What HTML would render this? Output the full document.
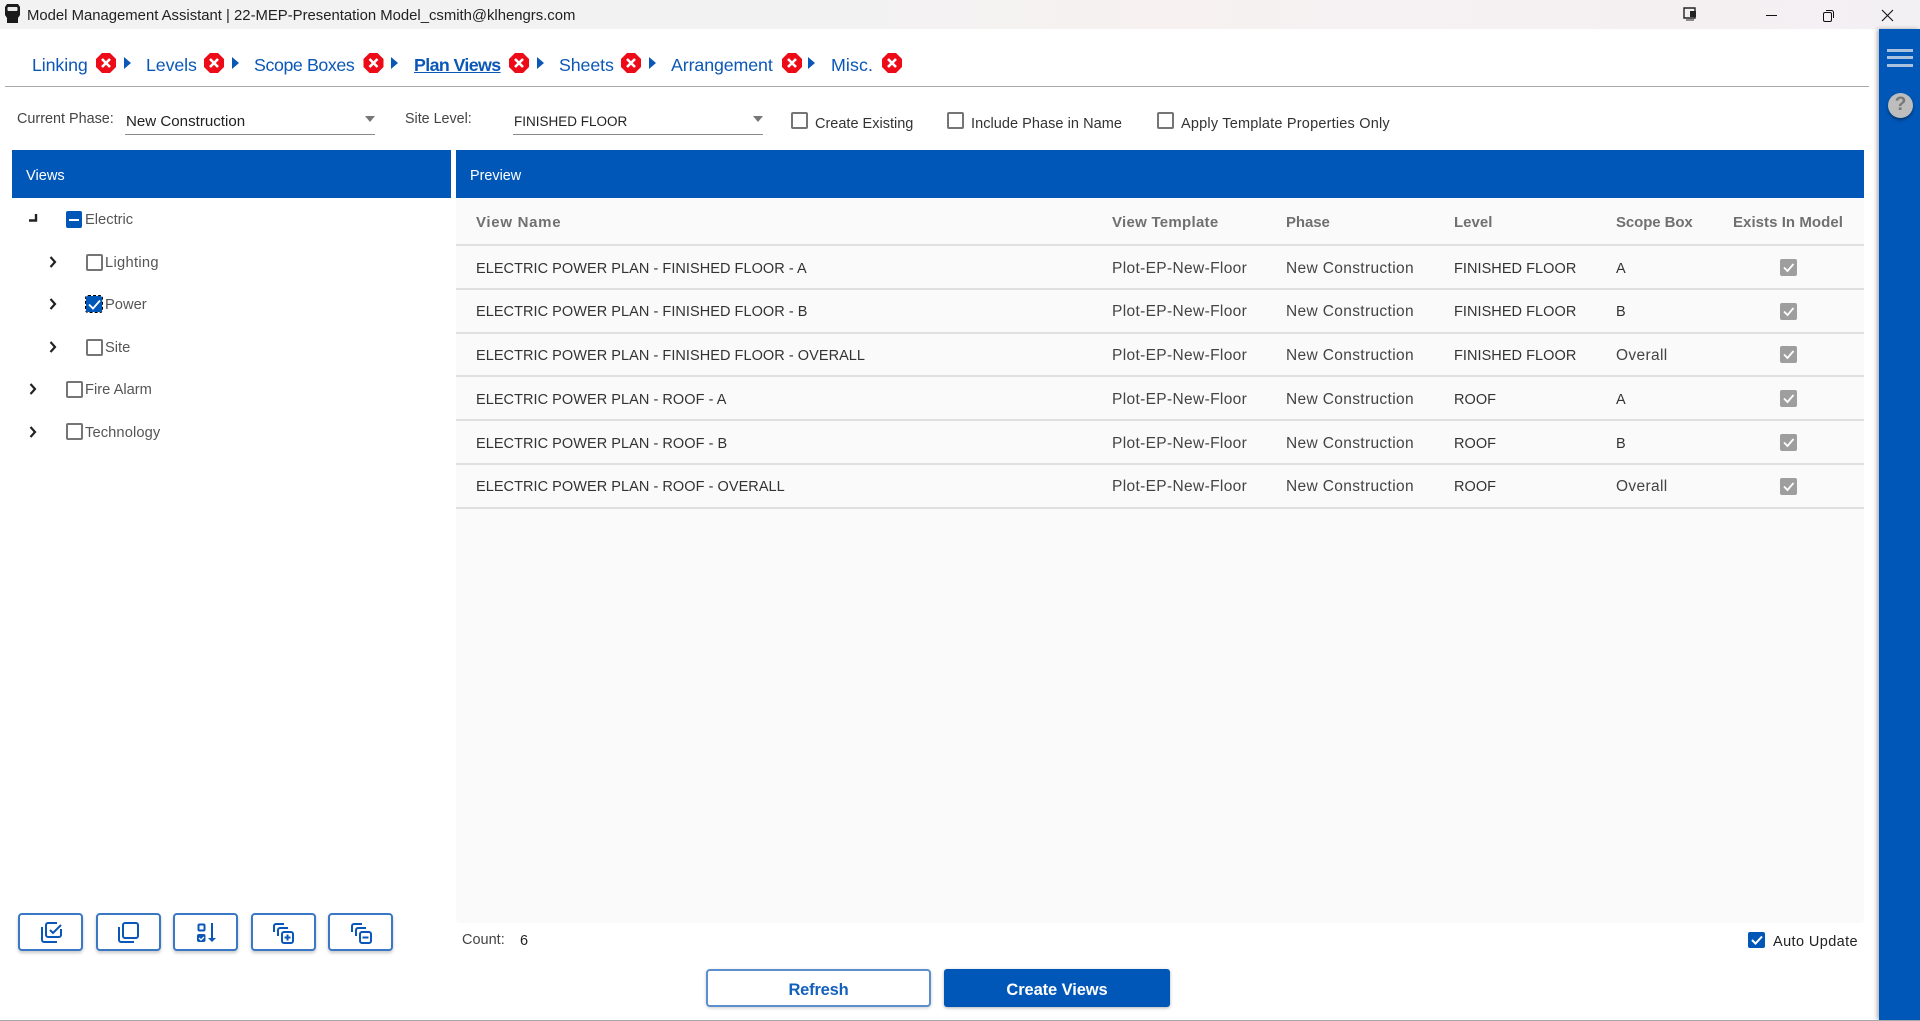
<!DOCTYPE html>
<html><head><meta charset="utf-8"><title>Model Management Assistant</title>
<style>
html,body{margin:0;padding:0;width:1920px;height:1021px;overflow:hidden;background:#fff;font-family:"Liberation Sans",sans-serif;color:#333}
.a{position:absolute}
.t{position:absolute;white-space:nowrap;line-height:20px;height:20px}
.nav{font-size:17.8px;color:#0b57b7;letter-spacing:-.1px}
.row{font-size:14.5px;color:#333;letter-spacing:.05px}
.m{font-size:15.5px;letter-spacing:.35px;color:#444}
.h{font-size:15px;color:#707070;font-weight:bold}
.line{position:absolute;left:456px;width:1408px;height:2px;background:#e0e0e0}
.cb{position:absolute;width:13px;height:13px;border:2px solid #757575;border-radius:2px;background:#fff}
.cbb{position:absolute;background:#0057b8;border-radius:2px}
.gc{position:absolute;left:1780px;width:17px;height:17px;background:#9e9e9e;border-radius:2px}
.btn{position:absolute;top:913px;width:61px;height:34px;border:2px solid #3b78c4;border-radius:4px;background:#fff;box-shadow:0 2px 3px rgba(0,0,0,.22)}
svg{position:absolute;overflow:visible}
.tree{font-size:14.7px;color:#555}
.lab{font-size:14.5px;color:#333}
</style></head><body>

<div class="a" style="left:0;top:0;width:1920px;height:29px;background:linear-gradient(90deg,#f2f2f2 0,#f3f2f2 45%,#f7f1f1 60%,#f3f0f3 100%)"></div>
<svg style="left:4px;top:3px" width="17" height="21" viewBox="0 0 17 21"><path d="M3 1h11l2 3v8l-2 3v5H3v-5l-2-3V4z" fill="#1a1a1a"/><rect x="3.500" y="4" width="10" height="4" rx="1" fill="#e8e8e8"/></svg>
<div class="t" style="left:27px;top:6px;font-size:14.87px;color:#222">Model Management Assistant | 22-MEP-Presentation Model_csmith@klhengrs.com</div>
<svg style="left:1682px;top:6px" width="16" height="16" viewBox="0 0 16 16"><path d="M2 2h11v10H2z" fill="none" stroke="#222" stroke-width="1.400"/><rect x="8" y="5" width="6" height="6" fill="#222"/><path d="M4 14h8" stroke="#222"/></svg>
<div class="a" style="left:1766px;top:15px;width:11px;height:1px;background:#111"></div>
<svg style="left:1822px;top:9px" width="13" height="13" viewBox="0 0 13 13"><rect x="1.500" y="3.500" width="8" height="9" rx="1.500" fill="none" stroke="#111"/><path d="M4 1.500h5.500a2 2 0 0 1 2 2V9" fill="none" stroke="#111"/></svg>
<svg style="left:1881px;top:9px" width="13" height="13" viewBox="0 0 13 13"><path d="M1 1l11 11M12 1L1 12" stroke="#111" stroke-width="1.100"/></svg>

<div class="t nav" style="left:32px;top:55px">Linking</div>
<div class="t nav" style="left:146px;top:55px">Levels</div>
<div class="t nav" style="left:254px;top:55px;letter-spacing:-.4px">Scope Boxes</div>
<div class="t nav" style="left:414px;top:55px;font-weight:bold;text-decoration:underline;letter-spacing:-.6px;color:#0b57b7">Plan Views</div>
<div class="t nav" style="left:559px;top:55px">Sheets</div>
<div class="t nav" style="left:671px;top:55px">Arrangement</div>
<div class="t nav" style="left:831px;top:55px;letter-spacing:.1px">Misc.</div>

<svg style="left:0;top:0" width="920" height="80" viewBox="0 0 920 80">
<g transform="translate(106 63)"><path d="M-4-10h8l6 6v8l-6 6h-8l-6-6v-8z" fill="#ec0b17"/><path d="M-4-4l8 8M4-4l-8 8" stroke="#fff" stroke-width="2.600"/></g>
<g transform="translate(214 63)"><path d="M-4-10h8l6 6v8l-6 6h-8l-6-6v-8z" fill="#ec0b17"/><path d="M-4-4l8 8M4-4l-8 8" stroke="#fff" stroke-width="2.600"/></g>
<g transform="translate(373.500 63)"><path d="M-4-10h8l6 6v8l-6 6h-8l-6-6v-8z" fill="#ec0b17"/><path d="M-4-4l8 8M4-4l-8 8" stroke="#fff" stroke-width="2.600"/></g>
<g transform="translate(519 63)"><path d="M-4-10h8l6 6v8l-6 6h-8l-6-6v-8z" fill="#ec0b17"/><path d="M-4-4l8 8M4-4l-8 8" stroke="#fff" stroke-width="2.600"/></g>
<g transform="translate(631 63)"><path d="M-4-10h8l6 6v8l-6 6h-8l-6-6v-8z" fill="#ec0b17"/><path d="M-4-4l8 8M4-4l-8 8" stroke="#fff" stroke-width="2.600"/></g>
<g transform="translate(792 63)"><path d="M-4-10h8l6 6v8l-6 6h-8l-6-6v-8z" fill="#ec0b17"/><path d="M-4-4l8 8M4-4l-8 8" stroke="#fff" stroke-width="2.600"/></g>
<g transform="translate(892 63)"><path d="M-4-10h8l6 6v8l-6 6h-8l-6-6v-8z" fill="#ec0b17"/><path d="M-4-4l8 8M4-4l-8 8" stroke="#fff" stroke-width="2.600"/></g>
<g fill="#0b57b7"><path d="M124 57l7 6-7 6z"/><path d="M232 57l7 6-7 6z"/><path d="M391 57l7 6-7 6z"/><path d="M537 57l7 6-7 6z"/><path d="M649 57l7 6-7 6z"/><path d="M808 57l7 6-7 6z"/></g>
</svg>

<div class="a" style="left:5px;top:86px;width:1864px;height:1px;background:#a8a8a8"></div>

<div class="t" style="left:17px;top:109px;font-size:14.4px;color:#444">Current Phase:</div>
<div class="t" style="left:126px;top:112px;font-size:15.1px;color:#222">New Construction</div>
<div class="a" style="left:125px;top:134px;width:250px;height:1px;background:#8a8a8a"></div>
<svg style="left:365px;top:116px" width="10" height="6"><path d="M0 0h10L5 6z" fill="#777"/></svg>
<div class="t" style="left:405px;top:109px;font-size:14.3px;color:#444">Site Level:</div>
<div class="t" style="left:514px;top:112px;font-size:13.5px;color:#222">FINISHED FLOOR</div>
<div class="a" style="left:513px;top:134px;width:250px;height:1px;background:#8a8a8a"></div>
<svg style="left:753px;top:116px" width="10" height="6"><path d="M0 0h10L5 6z" fill="#777"/></svg>

<div class="cb" style="left:791px;top:112px"></div>
<div class="t lab" style="left:815px;top:114px">Create Existing</div>
<div class="cb" style="left:947px;top:112px"></div>
<div class="t lab" style="left:971px;top:114px;letter-spacing:.05px">Include Phase in Name</div>
<div class="cb" style="left:1157px;top:112px"></div>
<div class="t lab" style="left:1181px;top:114px;letter-spacing:.2px">Apply Template Properties Only</div>

<!-- Views panel -->
<div class="a" style="left:12px;top:150px;width:439px;height:48px;background:#0057b8"></div>
<div class="t" style="left:26px;top:165px;font-size:14.6px;color:#fff;padding-top:1px">Views</div>
<svg style="left:28px;top:213px" width="10" height="10"><path d="M1 7.500h7V1" fill="none" stroke="#222" stroke-width="2.400"/></svg>
<div class="cbb" style="left:66px;top:211px;width:16px;height:17px"></div>
<div class="a" style="left:69px;top:219px;width:10px;height:2px;background:#fff"></div>
<div class="t tree" style="left:85px;top:210px">Electric</div>

<svg style="left:49px;top:256px" width="8" height="12"><path d="M1.500 1l4.500 5-4.500 5" fill="none" stroke="#222" stroke-width="2.200"/></svg>
<div class="cb" style="left:86px;top:254px"></div>
<div class="t tree" style="left:105px;top:253px;letter-spacing:.3px">Lighting</div>

<svg style="left:49px;top:298px" width="8" height="12"><path d="M1.500 1l4.500 5-4.500 5" fill="none" stroke="#222" stroke-width="2.200"/></svg>
<div class="cbb" style="left:86px;top:296px;width:16px;height:16px;outline:1px dashed #000"></div>
<svg style="left:88px;top:299px" width="13" height="11"><path d="M1 5.500l4 4 7-8" fill="none" stroke="#fff" stroke-width="1.800"/></svg>
<div class="t tree" style="left:105px;top:295px">Power</div>

<svg style="left:49px;top:341px" width="8" height="12"><path d="M1.500 1l4.500 5-4.500 5" fill="none" stroke="#222" stroke-width="2.200"/></svg>
<div class="cb" style="left:86px;top:339px"></div>
<div class="t tree" style="left:105px;top:338px">Site</div>

<svg style="left:29px;top:383px" width="8" height="12"><path d="M1.500 1l4.500 5-4.500 5" fill="none" stroke="#222" stroke-width="2.200"/></svg>
<div class="cb" style="left:66px;top:381px"></div>
<div class="t tree" style="left:85px;top:380px">Fire Alarm</div>

<svg style="left:29px;top:426px" width="8" height="12"><path d="M1.500 1l4.500 5-4.500 5" fill="none" stroke="#222" stroke-width="2.200"/></svg>
<div class="cb" style="left:66px;top:423px"></div>
<div class="t tree" style="left:85px;top:423px;letter-spacing:.1px">Technology</div>

<!-- Preview panel -->
<div class="a" style="left:456px;top:198px;width:1408px;height:725px;background:#fafafa;border-radius:0 0 4px 4px"></div>
<div class="a" style="left:456px;top:150px;width:1408px;height:48px;background:#0057b8"></div>
<div class="t" style="left:470px;top:166px;font-size:14.4px;color:#fff">Preview</div>

<div class="t h" style="left:476px;top:213px;letter-spacing:.7px">View Name</div>
<div class="t h" style="left:1112px;top:213px;letter-spacing:.28px">View Template</div>
<div class="t h" style="left:1286px;top:213px;letter-spacing:-.1px">Phase</div>
<div class="t h" style="left:1454px;top:213px">Level</div>
<div class="t h" style="left:1616px;top:213px;letter-spacing:-.1px">Scope Box</div>
<div class="t h" style="left:1733px;top:213px;letter-spacing:.05px">Exists In Model</div>
<div class="line" style="top:244px"></div>
<div class="line" style="top:288px"></div>
<div class="line" style="top:332px"></div>
<div class="line" style="top:375px"></div>
<div class="line" style="top:419px"></div>
<div class="line" style="top:463px"></div>
<div class="line" style="top:507px"></div>

<div class="t row" style="left:476px;top:259px">ELECTRIC POWER PLAN - FINISHED FLOOR - A</div>
<div class="t row m" style="left:1112px;top:259px">Plot-EP-New-Floor</div>
<div class="t row m" style="left:1286px;top:259px">New Construction</div>
<div class="t row" style="left:1454px;top:259px">FINISHED FLOOR</div>
<div class="t row" style="left:1616px;top:259px">A</div>
<div class="gc" style="top:259px"></div>

<div class="t row" style="left:476px;top:302px">ELECTRIC POWER PLAN - FINISHED FLOOR - B</div>
<div class="t row m" style="left:1112px;top:302px">Plot-EP-New-Floor</div>
<div class="t row m" style="left:1286px;top:302px">New Construction</div>
<div class="t row" style="left:1454px;top:302px">FINISHED FLOOR</div>
<div class="t row" style="left:1616px;top:302px">B</div>
<div class="gc" style="top:303px"></div>

<div class="t row" style="left:476px;top:346px">ELECTRIC POWER PLAN - FINISHED FLOOR - OVERALL</div>
<div class="t row m" style="left:1112px;top:346px">Plot-EP-New-Floor</div>
<div class="t row m" style="left:1286px;top:346px">New Construction</div>
<div class="t row" style="left:1454px;top:346px">FINISHED FLOOR</div>
<div class="t row m" style="left:1616px;top:346px">Overall</div>
<div class="gc" style="top:346px"></div>

<div class="t row" style="left:476px;top:390px">ELECTRIC POWER PLAN - ROOF - A</div>
<div class="t row m" style="left:1112px;top:390px">Plot-EP-New-Floor</div>
<div class="t row m" style="left:1286px;top:390px">New Construction</div>
<div class="t row" style="left:1454px;top:390px">ROOF</div>
<div class="t row" style="left:1616px;top:390px">A</div>
<div class="gc" style="top:390px"></div>

<div class="t row" style="left:476px;top:434px">ELECTRIC POWER PLAN - ROOF - B</div>
<div class="t row m" style="left:1112px;top:434px">Plot-EP-New-Floor</div>
<div class="t row m" style="left:1286px;top:434px">New Construction</div>
<div class="t row" style="left:1454px;top:434px">ROOF</div>
<div class="t row" style="left:1616px;top:434px">B</div>
<div class="gc" style="top:434px"></div>

<div class="t row" style="left:476px;top:477px">ELECTRIC POWER PLAN - ROOF - OVERALL</div>
<div class="t row m" style="left:1112px;top:477px">Plot-EP-New-Floor</div>
<div class="t row m" style="left:1286px;top:477px">New Construction</div>
<div class="t row" style="left:1454px;top:477px">ROOF</div>
<div class="t row m" style="left:1616px;top:477px">Overall</div>
<div class="gc" style="top:478px"></div>

<svg style="left:1780px;top:258px" width="17" height="240"><g fill="none" stroke="#fff" stroke-width="1.800"><path d="M4 9.500l3.500 3.500 6-7"/><path d="M4 53.500l3.500 3.500 6-7"/><path d="M4 96.500l3.500 3.500 6-7"/><path d="M4 140.500l3.500 3.500 6-7"/><path d="M4 184.500l3.500 3.500 6-7"/><path d="M4 228.500l3.500 3.500 6-7"/></g></svg>

<!-- Footer -->
<div class="t" style="left:462px;top:930px;font-size:14.5px;color:#444">Count:</div>
<div class="t" style="left:520px;top:931px;font-size:14.5px;color:#222">6</div>
<div class="cbb" style="left:1748px;top:932px;width:17px;height:16px"></div>
<svg style="left:1750px;top:934px" width="14" height="12"><path d="M2 6l3.500 3.500 6.500-7" fill="none" stroke="#fff" stroke-width="2"/></svg>
<div class="t lab" style="left:1773px;top:932px;color:#222;letter-spacing:.4px">Auto Update</div>

<div class="btn" style="left:18px"></div>
<div class="btn" style="left:96px"></div>
<div class="btn" style="left:173px"></div>
<div class="btn" style="left:251px"></div>
<div class="btn" style="left:328px"></div>

<svg style="left:41px;top:922px" width="21" height="21" viewBox="0 0 21 21" fill="none" stroke="#0b57b7" stroke-width="2"><path d="M1 5v13a2 2 0 0 0 2 2h13"/><path d="M16 1H7a2 2 0 0 0-2 2v10a2 2 0 0 0 2 2h11a2 2 0 0 0 2-2V7"/><path d="M9 8l3 3 8-8"/></svg>
<svg style="left:118px;top:922px" width="21" height="21" viewBox="0 0 21 21" fill="none" stroke="#0b57b7" stroke-width="2"><path d="M1 5v13a2 2 0 0 0 2 2h13"/><rect x="5" y="1" width="15" height="15" rx="2"/></svg>
<svg style="left:197px;top:923px" width="20" height="20" viewBox="0 0 20 20"><rect x="1.500" y="1.500" width="6" height="6" rx="1" fill="none" stroke="#0b57b7" stroke-width="2"/><rect x="0" y="11" width="8.500" height="8" rx="2" fill="#0b57b7"/><path d="M2 15l2 2 3-3" fill="none" stroke="#fff" stroke-width="1.300"/><path d="M15 0v17" stroke="#0b57b7" stroke-width="2"/><path d="M11 15h8l-4 4z" fill="#0b57b7"/></svg>
<svg style="left:273px;top:923px" width="21" height="21" viewBox="0 0 21 21" fill="none" stroke="#0b57b7" stroke-width="2"><path d="M1 9V3a2 2 0 0 1 2-2h8"/><path d="M5 13V7a2 2 0 0 1 2-2h8"/><rect x="9" y="9" width="11" height="11" rx="2"/><path d="M11.500 14.500h6M14.500 11.500v6"/></svg>
<svg style="left:351px;top:923px" width="21" height="21" viewBox="0 0 21 21" fill="none" stroke="#0b57b7" stroke-width="2"><path d="M1 9V3a2 2 0 0 1 2-2h8"/><path d="M5 13V7a2 2 0 0 1 2-2h8"/><rect x="9" y="9" width="11" height="11" rx="2"/><path d="M11.500 14.500h6"/></svg>

<div class="a" style="left:706px;top:969px;width:221px;height:34px;border:2px solid #5b8fcd;border-radius:4px;background:#fff;box-shadow:0 1px 3px rgba(0,0,0,.2)"></div>
<div class="t" style="left:706px;top:980px;width:225px;text-align:center;font-size:16.5px;font-weight:bold;color:#1460bd;letter-spacing:-.2px">Refresh</div>
<div class="a" style="left:944px;top:969px;width:226px;height:38px;background:#0057b8;border-radius:3px;box-shadow:0 1px 3px rgba(0,0,0,.3)"></div>
<div class="t" style="left:944px;top:980px;width:226px;text-align:center;font-size:16.5px;font-weight:bold;color:#fff;letter-spacing:-.1px">Create Views</div>

<!-- Right sidebar -->
<div class="a" style="left:1879px;top:29px;width:41px;height:991px;background:#0057b8;box-shadow:-2px 0 4px rgba(0,0,0,.3)"></div>
<div class="a" style="left:1887px;top:49px;width:26px;height:3px;background:#a9c1dd"></div>
<div class="a" style="left:1887px;top:56px;width:26px;height:3px;background:#a9c1dd"></div>
<div class="a" style="left:1887px;top:64px;width:26px;height:3px;background:#a9c1dd"></div>
<div class="a" style="left:1888px;top:93px;width:25px;height:25px;border-radius:50%;background:#bdbdbd;box-shadow:0 2px 3px rgba(0,0,0,.4)"></div>
<div class="t" style="left:1888px;top:95px;width:25px;text-align:center;font-size:19px;font-weight:bold;color:#777">?</div>

<div class="a" style="left:0;top:1020px;width:1920px;height:1px;background:#a8a8a8"></div>
</body></html>
